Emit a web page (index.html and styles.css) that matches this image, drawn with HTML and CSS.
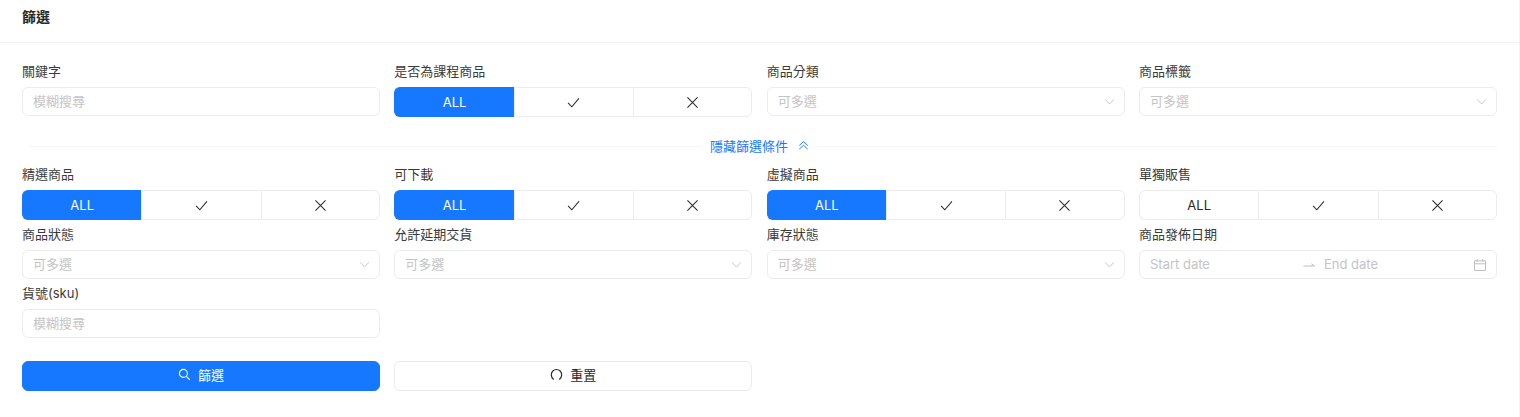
FILE: index.html
```html
<!DOCTYPE html>
<html lang="zh-Hant">
<head>
<meta charset="utf-8">
<title>篩選</title>
<link rel="stylesheet" href="styles.css">
</head>
<body>
<svg class="defs" aria-hidden="true">
  <symbol id="check" viewBox="0 0 16 16"><path d="M2.2 8.4 6.2 12.6 13.8 3.6" fill="none" stroke="currentColor" stroke-width="1.1"/></symbol>
  <symbol id="cross" viewBox="0 0 16 16"><path d="M2.6 2.6 13.4 13.4M13.4 2.6 2.6 13.4" fill="none" stroke="currentColor" stroke-width="1.1"/></symbol>
  <symbol id="down" viewBox="0 0 12 12"><path d="M1.2 3.6 6 8.8 10.8 3.6" fill="none" stroke="currentColor" stroke-width="1"/></symbol>
</svg>
<main class="panel">
  <header class="panel-head"><h1>篩選</h1></header>
  <form class="panel-body">
    <div class="grid top">
      <div class="field"><label>關鍵字</label><div class="box"><span class="ph">模糊搜尋</span></div></div>
      <div class="field"><label>是否為課程商品</label>
        <div class="seg"><span class="opt on">ALL</span><span class="opt"><svg><use href="#check"/></svg></span><span class="opt"><svg><use href="#cross"/></svg></span></div></div>
      <div class="field"><label>商品分類</label><div class="box"><span class="ph">可多選</span><svg class="chev"><use href="#down"/></svg></div></div>
      <div class="field"><label>商品標籤</label><div class="box"><span class="ph">可多選</span><svg class="chev"><use href="#down"/></svg></div></div>
    </div>
    <div class="divider"><span class="toggle">隱藏篩選條件<svg class="dbl" viewBox="0 0 12 12"><path d="M1.4 6 6 1.8 10.6 6M1.4 10 6 5.8 10.6 10" fill="none" stroke="currentColor" stroke-width="1"/></svg></span></div>
    <div class="grid rows">
      <div class="field"><label>精選商品</label>
        <div class="seg"><span class="opt on">ALL</span><span class="opt"><svg><use href="#check"/></svg></span><span class="opt"><svg><use href="#cross"/></svg></span></div></div>
      <div class="field"><label>可下載</label>
        <div class="seg"><span class="opt on">ALL</span><span class="opt"><svg><use href="#check"/></svg></span><span class="opt"><svg><use href="#cross"/></svg></span></div></div>
      <div class="field"><label>虛擬商品</label>
        <div class="seg"><span class="opt on">ALL</span><span class="opt"><svg><use href="#check"/></svg></span><span class="opt"><svg><use href="#cross"/></svg></span></div></div>
      <div class="field"><label>單獨販售</label>
        <div class="seg"><span class="opt">ALL</span><span class="opt"><svg><use href="#check"/></svg></span><span class="opt"><svg><use href="#cross"/></svg></span></div></div>
      <div class="field"><label>商品狀態</label><div class="box"><span class="ph">可多選</span><svg class="chev"><use href="#down"/></svg></div></div>
      <div class="field"><label>允許延期交貨</label><div class="box"><span class="ph">可多選</span><svg class="chev"><use href="#down"/></svg></div></div>
      <div class="field"><label>庫存狀態</label><div class="box"><span class="ph">可多選</span><svg class="chev"><use href="#down"/></svg></div></div>
      <div class="field"><label>商品發佈日期</label>
        <div class="box date"><span class="ph date-part">Start date</span>
          <svg class="arrow" viewBox="0 0 12 8"><path d="M0.5 5H11.5L8.4 2.8" fill="none" stroke="currentColor" stroke-width="1"/></svg>
          <span class="ph date-part">End date</span>
          <svg class="cal" viewBox="0 0 14 14"><path d="M1.5 2.8H12.5V12.5H1.5ZM1.5 5.8H12.5M4.2 1V4M9.8 1V4" fill="none" stroke="currentColor" stroke-width="1"/></svg></div></div>
      <div class="field"><label>貨號(sku)</label><div class="box"><span class="ph">模糊搜尋</span></div></div>
    </div>
    <div class="grid actions">
      <button type="button" class="btn primary"><svg class="ico" viewBox="0 0 14 14"><circle cx="5.8" cy="5.8" r="4.3" fill="none" stroke="currentColor" stroke-width="1.2"/><path d="M9 9 12.8 12.8" fill="none" stroke="currentColor" stroke-width="1.2"/></svg>篩選</button>
      <button type="button" class="btn"><svg class="ico" viewBox="0 0 14 14"><path d="M4 12.4C2.4 11.3 1.4 9.4 1.4 7.2 1.4 4 3.9 1.6 7 1.6S12.6 4 12.6 7.2C12.6 9.4 11.6 11.3 10 12.4" fill="none" stroke="currentColor" stroke-width="1.3"/></svg>重置</button>
    </div>
  </form>
</main>
</body>
</html>
```
FILE: styles.css
```css
* { box-sizing: border-box; }
html, body { margin: 0; height: 100%; background: #fff; }
body {
  font-family: Inter, "Noto Sans CJK TC", "Liberation Sans", sans-serif;
  font-size: 13px;
  color: #333;
}
.defs { display: none; }
.panel { height: 417px; overflow: hidden; border-right: 1px solid #f2f2f2; }
.panel-head {
  height: 43px;
  padding: 7px 22px 0;
  border-bottom: 1px solid #f4f4f4;
}
.panel-head h1 { margin: 0; font-size: 14px; line-height: 20px; font-weight: 700; color: #2a2a2a; }
.panel-body { padding: 19px 22px 0; }
.grid {
  display: grid;
  grid-template-columns: repeat(4, 358px);
  column-gap: 14.33px;
}
.top { grid-template-rows: 59px; }
.rows { grid-template-rows: 60px 59px 59px; }
.field label { display: block; height: 25px; line-height: 18px; font-size: 13px; color: #3a3a3a; }
.box {
  height: 29px;
  display: flex;
  align-items: center;
  padding: 0 10px;
  border: 1px solid #ececec;
  border-radius: 6px;
  background: #fff;
}
.ph { color: #c4c4c4; font-size: 13px; margin-bottom: 2px; }
.chev { width: 11px; height: 11px; margin-left: auto; margin-right: -1px; color: #c4c4c4; }
.date-part { flex: 1; }
.date-part + .arrow + .date-part { flex: 0 0 149px; }
.arrow { width: 12px; height: 8px; color: #bdbdbd; margin-right: 9px; }
.cal { width: 14px; height: 14px; color: #c0c0c0; margin-left: auto; margin-right: -1px; }
.seg {
  height: 30px;
  display: grid;
  grid-template-columns: repeat(3, 1fr);
  background: #fff;
}
.opt {
  display: flex;
  align-items: center;
  justify-content: center;
  font-size: 13px;
  color: #2a2a2a;
  border: 1px solid #ececec;
  border-right: 0;
}
.opt:first-child { border-radius: 6px 0 0 6px; }
.opt:last-child { border-right: 1px solid #ececec; border-radius: 0 6px 6px 0; }
.opt svg { width: 15px; height: 15px; }
.opt.on { background: #1677ff; border-color: #1677ff; color: #fff; }
.divider {
  height: 30px;
  margin: 10px 0 4px 7px;
  width: 1468px;
  display: flex;
  align-items: center;
  justify-content: center;
  background: linear-gradient(#f6f6f6, #f6f6f6) center / 100% 1px no-repeat;
}
.toggle {
  display: flex;
  align-items: center;
  gap: 10px;
  padding: 0 8px 2px;
  margin-left: -7px;
  background: #fff;
  color: #1677ff;
  font-size: 13px;
}
.dbl { width: 11px; height: 11px; color: #1677ff; }
.actions { margin-top: 17.5px; }
.btn {
  height: 30px;
  display: flex;
  align-items: center;
  justify-content: center;
  gap: 7px;
  font: inherit;
  font-size: 13px;
  color: #2a2a2a;
  background: #fff;
  border: 1px solid #ececec;
  border-radius: 6px;
  padding: 0 0 2px;
}
.btn.primary { background: #1677ff; border-color: #1677ff; color: #fff; }
.ico { width: 13px; height: 13px; }
```
